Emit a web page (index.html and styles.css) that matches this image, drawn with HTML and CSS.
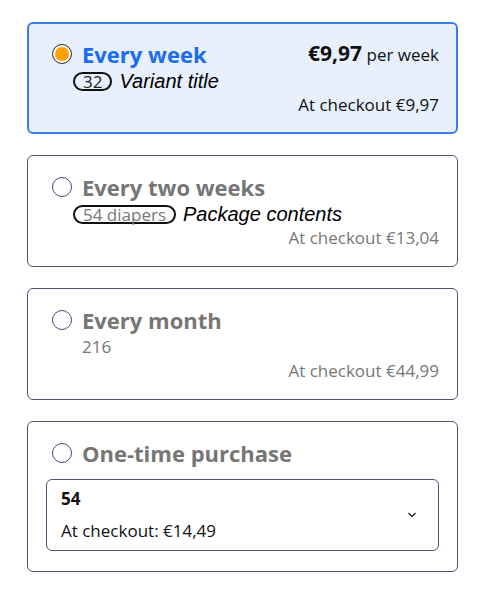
FILE: index.html
```html
<!DOCTYPE html>
<html lang="en">

<head>
    <meta charset="UTF-8">
    <meta name="viewport" content="width=device-width, initial-scale=1.0">
    <title>purchase options</title>
    <link rel="stylesheet" href="styles.css">
</head>

<body>
    <div class="plans">
        <div class="plan plan--active">
            <div class="plan__head">
                <span class="radio radio--checked"></span>
                <div class="plan__title">Every week</div>
                <div class="plan__price"><b>€9,97</b> per week</div>
            </div>
            <div class="plan__meta">
                <span class="pill">32</span>
                <i class="note">Variant title</i>
            </div>
            <div class="plan__checkout">At checkout €9,97</div>
        </div>

        <div class="plan">
            <div class="plan__head">
                <span class="radio"></span>
                <div class="plan__title">Every two weeks</div>
            </div>
            <div class="plan__meta">
                <span class="pill">54 diapers</span>
                <i class="note">Package contents</i>
            </div>
            <div class="plan__checkout">At checkout €13,04</div>
        </div>

        <div class="plan">
            <div class="plan__head">
                <span class="radio"></span>
                <div class="plan__title">Every month</div>
            </div>
            <div class="plan__meta">216</div>
            <div class="plan__checkout">At checkout €44,99</div>
        </div>

        <div class="plan">
            <div class="plan__head">
                <span class="radio"></span>
                <div class="plan__title">One-time purchase</div>
            </div>
            <div class="select">
                <div class="select__text">
                    <div class="select__size">54</div>
                    <div class="select__price">At checkout: €14,49</div>
                </div>
                <svg class="select__chevron" width="12" height="8" viewBox="0 0 12 8">
                    <path d="M2.5 2 L6 5.5 L9.5 2" fill="none" stroke="#222" stroke-width="1.3" />
                </svg>
            </div>
        </div>
    </div>
</body>

</html>
```

FILE: styles.css
```css
* {
    box-sizing: border-box;
}

body {
    margin: 0;
    font-family: "Open Sans", "Noto Sans", sans-serif;
    color: #111;
}

.plans {
    display: flex;
    flex-direction: column;
    gap: 21px;
    padding: 22px 24px 22px 27px;
}

.plan {
    border: 1px solid #4a5578;
    border-radius: 6px;
    padding: 19px 18px 16px 24px;
    background: #fff;
}

.plan--active {
    border: 2px solid #3b7cec;
    background: #e8f0fe;
    padding: 18px 17px 15px 23px;
}

.plan__head {
    display: flex;
    align-items: center;
    height: 24px;
    line-height: 24px;
}

.radio {
    width: 20px;
    height: 20px;
    border-radius: 50%;
    border: 1.5px solid #3f4d78;
    background: #fff;
    margin-right: 10px;
    flex: none;
}

.radio--checked {
    border: 1px solid #2d3a63;
    background: #ffa000;
    box-shadow: inset 0 0 0 2px #fff;
}

.plan__title {
    font-size: 22px;
    font-weight: 700;
    color: #767676;
    flex: 1;
}

.plan--active .plan__title {
    color: #1a6cf0;
}

.plan__price {
    font-size: 17px;
    color: #111;
}

.plan__price b {
    font-size: 21px;
}

.plan__meta {
    display: flex;
    align-items: center;
    height: 24px;
    margin-top: 3px;
    line-height: 20px;
    padding-left: 30px;
    font-size: 17px;
    color: #777;
}

.pill {
    border: 2px solid #111;
    border-radius: 11px;
    padding: 0 8px;
    margin-left: -9px;
    margin-right: 7px;
    line-height: 15px;
    color: #777;
}

.plan--active .pill {
    color: #222;
}

.note {
    font-family: "Liberation Sans", Arial, sans-serif;
    font-size: 20px;
    color: #000;
}

.plan__checkout {
    text-align: right;
    font-size: 17px;
    line-height: 24px;
    color: #777;
}

.plan--active .plan__checkout {
    color: #111;
}

.select {
    display: flex;
    align-items: center;
    margin: 14px 0 4px -6px;
    border: 1px solid #4a5578;
    border-radius: 6px;
    padding: 7px 20px 7px 14px;
}

.select__text {
    flex: 1;
    display: flex;
    flex-direction: column;
    gap: 8px;
    font-size: 17px;
    line-height: 24px;
}

.select__size {
    font-weight: 700;
}
```
